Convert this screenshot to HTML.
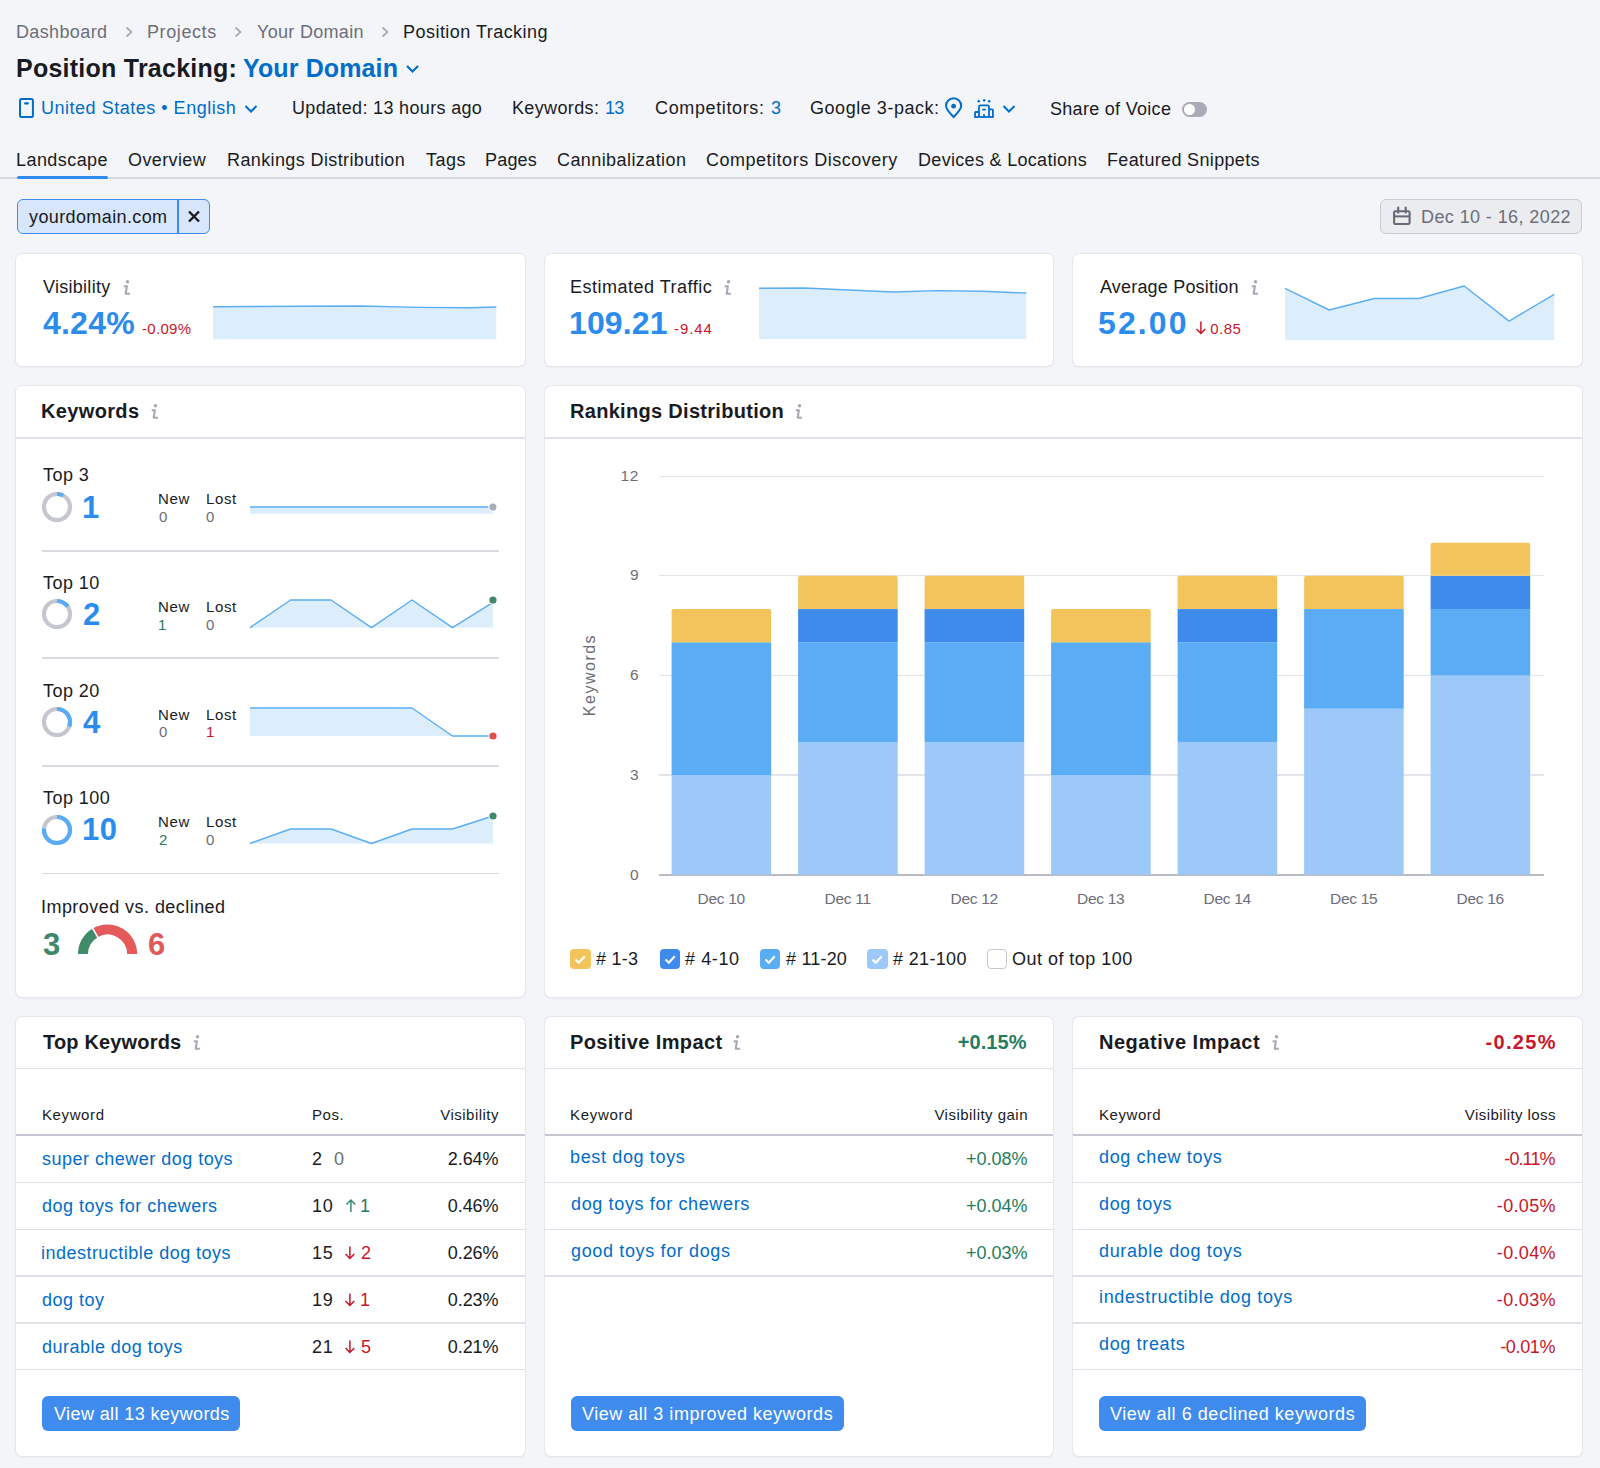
<!DOCTYPE html>
<html><head><meta charset="utf-8"><style>
*{box-sizing:border-box;margin:0;padding:0}
html,body{width:1600px;height:1468px;overflow:hidden;background:#F4F5F9;font-family:"Liberation Sans",sans-serif;color:#191B23;position:relative}
svg{overflow:visible}
</style></head><body>
<div style="position:absolute;left:0.00px;top:177.00px;width:1600.00px;height:2.00px;background:#D6D8DE"></div>
<div style="position:absolute;left:16.50px;top:175.50px;width:91.00px;height:3.00px;background:#2E8BEF;border-radius:2px"></div>
<div style="position:absolute;left:16.80px;top:199.20px;width:192.90px;height:34.50px;background:#D7E6FA;border:1px solid #3A8DEE;border-radius:6px"></div>
<div style="position:absolute;left:177.00px;top:200.00px;width:1.50px;height:33.00px;background:#3A8DEE"></div>
<svg style="position:absolute;left:186.00px;top:209.00px" width="16" height="16" viewBox="186 209 16 16"><path d="M189 211.5 L199 221.5 M199 211.5 L189 221.5" stroke="#191B23" stroke-width="2.4" stroke-linecap="butt"/></svg>
<div style="position:absolute;left:1380.00px;top:199.00px;width:201.50px;height:34.50px;background:#EAECF0;border:1px solid #C9CBD3;border-radius:6px"></div>
<svg style="position:absolute;left:1390.00px;top:205.00px" width="24" height="24" viewBox="1390 205 24 24"><rect x="1394.1" y="211.2" width="15.5" height="12.8" rx="1.2" fill="none" stroke="#676A75" stroke-width="2.1"/><path d="M1394 216.4 H1409.6" stroke="#676A75" stroke-width="2"/><path d="M1398.2 207.6 V212.6 M1405.7 207.6 V212.6" stroke="#676A75" stroke-width="2.1" stroke-linecap="round"/></svg>
<svg style="position:absolute;left:122.70px;top:25.00px" width="12" height="14" viewBox="122.7 25 12 14"><path d="M126.2 27.5 L131.2 32 L126.2 36.5" fill="none" stroke="#A9ABB6" stroke-width="1.8"/></svg>
<svg style="position:absolute;left:232.20px;top:25.00px" width="12" height="14" viewBox="232.2 25 12 14"><path d="M235.7 27.5 L240.7 32 L235.7 36.5" fill="none" stroke="#A9ABB6" stroke-width="1.8"/></svg>
<svg style="position:absolute;left:378.70px;top:25.00px" width="12" height="14" viewBox="378.7 25 12 14"><path d="M382.2 27.5 L387.2 32 L382.2 36.5" fill="none" stroke="#A9ABB6" stroke-width="1.8"/></svg>
<svg style="position:absolute;left:403.00px;top:60.00px" width="20" height="16" viewBox="403 60 20 16"><path d="M407 66 L412.5 71.5 L418 66" fill="none" stroke="#006DCA" stroke-width="2.2"/></svg>
<svg style="position:absolute;left:17.00px;top:96.00px" width="20" height="24" viewBox="17 96 20 24"><rect x="20" y="99.1" width="12.9" height="17.8" rx="1.5" fill="none" stroke="#006DCA" stroke-width="2"/><rect x="24.1" y="102.2" width="4.8" height="2.3" rx="1" fill="#006DCA"/></svg>
<svg style="position:absolute;left:243.00px;top:102.00px" width="16" height="14" viewBox="243 102 16 14"><path d="M245.5 106 L251 111.5 L256.5 106" fill="none" stroke="#006DCA" stroke-width="2"/></svg>
<svg style="position:absolute;left:943.00px;top:97.00px" width="22" height="23" viewBox="943 97 22 23"><path d="M953.6 117 C948 111.5 946 108.5 946 105.8 A7.6 7.6 0 0 1 961.2 105.8 C961.2 108.5 959.2 111.5 953.6 117 Z" fill="none" stroke="#006DCA" stroke-width="2"/><circle cx="953.6" cy="106.2" r="2.4" fill="#006DCA"/></svg>
<svg style="position:absolute;left:972.00px;top:97.00px" width="24" height="23" viewBox="972 97 24 23"><g fill="none" stroke="#006DCA" stroke-width="1.8" stroke-linejoin="round"><path d="M979 117 V106.6 Q979 105.3 980.3 105.3 H987.7 Q989 105.3 989 106.6 V117"/><path d="M975.1 117 V112.6 Q975.1 112 975.7 112 H979"/><path d="M989 109.3 H992.3 Q992.9 109.3 992.9 109.9 V117"/><path d="M974.2 117 H993.8"/><path d="M982.9 109.6 H985.1" stroke-linecap="round"/><path d="M984 116.5 V114.9" stroke-linecap="round"/></g><circle cx="978.8" cy="101.3" r="1.25" fill="#006DCA"/><circle cx="984.2" cy="100.2" r="1.25" fill="#006DCA"/><circle cx="989.2" cy="101.3" r="1.25" fill="#006DCA"/></svg>
<svg style="position:absolute;left:1001.00px;top:102.00px" width="16" height="14" viewBox="1001 102 16 14"><path d="M1003.5 106 L1009 111.5 L1014.5 106" fill="none" stroke="#006DCA" stroke-width="2"/></svg>
<div style="position:absolute;left:1181.60px;top:101.80px;width:25.20px;height:15.00px;background:#A9ABB6;border-radius:8px"></div>
<div style="position:absolute;left:1183.6px;top:103.8px;width:11px;height:11px;border-radius:50%;background:#fff"></div>
<div style="position:absolute;left:16.00px;top:254.00px;width:509.00px;height:112.00px;background:#fff;border-radius:6px;box-shadow:0 0 0 1px #E6E7ED,0 1px 2px rgba(25,27,35,.10)"></div>
<div style="position:absolute;left:545.00px;top:254.00px;width:508.00px;height:112.00px;background:#fff;border-radius:6px;box-shadow:0 0 0 1px #E6E7ED,0 1px 2px rgba(25,27,35,.10)"></div>
<div style="position:absolute;left:1073.00px;top:254.00px;width:509.00px;height:112.00px;background:#fff;border-radius:6px;box-shadow:0 0 0 1px #E6E7ED,0 1px 2px rgba(25,27,35,.10)"></div>
<div style="position:absolute;left:16.00px;top:386.00px;width:509.00px;height:610.50px;background:#fff;border-radius:6px;box-shadow:0 0 0 1px #E6E7ED,0 1px 2px rgba(25,27,35,.10)"></div>
<div style="position:absolute;left:545.00px;top:386.00px;width:1037.00px;height:611.00px;background:#fff;border-radius:6px;box-shadow:0 0 0 1px #E6E7ED,0 1px 2px rgba(25,27,35,.10)"></div>
<div style="position:absolute;left:16.00px;top:1017.00px;width:509.00px;height:439.00px;background:#fff;border-radius:6px;box-shadow:0 0 0 1px #E6E7ED,0 1px 2px rgba(25,27,35,.10)"></div>
<div style="position:absolute;left:545.00px;top:1017.00px;width:508.00px;height:439.00px;background:#fff;border-radius:6px;box-shadow:0 0 0 1px #E6E7ED,0 1px 2px rgba(25,27,35,.10)"></div>
<div style="position:absolute;left:1073.00px;top:1017.00px;width:509.00px;height:439.00px;background:#fff;border-radius:6px;box-shadow:0 0 0 1px #E6E7ED,0 1px 2px rgba(25,27,35,.10)"></div>
<svg style="position:absolute;left:210.60px;top:303.80px" width="293.4" height="37.2" viewBox="210.6 303.8 293.4 37.2"><path d="M212.6 306.5 L300.0 306.0 L360.0 305.8 L420.0 307.2 L470.0 307.5 L496.0 306.8 L496.0 339.0 L212.6 339.0 Z" fill="#DCEDFC"/><path d="M212.6 306.5 L300.0 306.0 L360.0 305.8 L420.0 307.2 L470.0 307.5 L496.0 306.8" fill="none" stroke="#5AAEF5" stroke-width="1.4" stroke-linejoin="round"/></svg>
<svg style="position:absolute;left:756.70px;top:286.00px" width="277.3" height="55" viewBox="756.7 286 277.3 55"><path d="M758.7 288.3 L804.0 288.0 L893.0 292.0 L938.0 290.6 L982.0 291.3 L1026.0 293.0 L1026.0 339.0 L758.7 339.0 Z" fill="#DCEDFC"/><path d="M758.7 288.3 L804.0 288.0 L893.0 292.0 L938.0 290.6 L982.0 291.3 L1026.0 293.0" fill="none" stroke="#5AAEF5" stroke-width="1.4" stroke-linejoin="round"/></svg>
<svg style="position:absolute;left:1283.10px;top:283.90px" width="279.3" height="58.3" viewBox="1283.1 283.9 279.3 58.3"><path d="M1285.1 288.3 L1329.3 309.9 L1374.5 298.4 L1418.8 298.4 L1464.3 285.9 L1509.2 321.0 L1554.4 294.3 L1554.4 340.2 L1285.1 340.2 Z" fill="#DCEDFC"/><path d="M1285.1 288.3 L1329.3 309.9 L1374.5 298.4 L1418.8 298.4 L1464.3 285.9 L1509.2 321.0 L1554.4 294.3" fill="none" stroke="#5AAEF5" stroke-width="1.4" stroke-linejoin="round"/></svg>
<svg style="position:absolute;left:121.60px;top:278.00px" width="12" height="19" viewBox="121.6 278 12 19"><circle cx="127.10" cy="281.70" r="1.75" fill="#A6A9B3"/><path d="M123.30 286.20 H126.50 L125.30 293.70 H129.50" fill="none" stroke="#A6A9B3" stroke-width="2.1" stroke-linejoin="round"/></svg>
<svg style="position:absolute;left:723.00px;top:278.00px" width="12" height="19" viewBox="723 278 12 19"><circle cx="728.50" cy="281.70" r="1.75" fill="#A6A9B3"/><path d="M724.70 286.20 H727.90 L726.70 293.70 H730.90" fill="none" stroke="#A6A9B3" stroke-width="2.1" stroke-linejoin="round"/></svg>
<svg style="position:absolute;left:1249.70px;top:278.00px" width="12" height="19" viewBox="1249.7 278 12 19"><circle cx="1255.20" cy="281.70" r="1.75" fill="#A6A9B3"/><path d="M1251.40 286.20 H1254.60 L1253.40 293.70 H1257.60" fill="none" stroke="#A6A9B3" stroke-width="2.1" stroke-linejoin="round"/></svg>
<svg style="position:absolute;left:149.90px;top:401.80px" width="12" height="19" viewBox="149.9 401.8 12 19"><circle cx="155.40" cy="405.50" r="1.75" fill="#A6A9B3"/><path d="M151.60 410.00 H154.80 L153.60 417.50 H157.80" fill="none" stroke="#A6A9B3" stroke-width="2.1" stroke-linejoin="round"/></svg>
<svg style="position:absolute;left:793.80px;top:401.80px" width="12" height="19" viewBox="793.8 401.8 12 19"><circle cx="799.30" cy="405.50" r="1.75" fill="#A6A9B3"/><path d="M795.50 410.00 H798.70 L797.50 417.50 H801.70" fill="none" stroke="#A6A9B3" stroke-width="2.1" stroke-linejoin="round"/></svg>
<svg style="position:absolute;left:192.40px;top:1032.70px" width="12" height="19" viewBox="192.4 1032.7 12 19"><circle cx="197.90" cy="1036.40" r="1.75" fill="#A6A9B3"/><path d="M194.10 1040.90 H197.30 L196.10 1048.40 H200.30" fill="none" stroke="#A6A9B3" stroke-width="2.1" stroke-linejoin="round"/></svg>
<svg style="position:absolute;left:732.40px;top:1032.70px" width="12" height="19" viewBox="732.4 1032.7 12 19"><circle cx="737.90" cy="1036.40" r="1.75" fill="#A6A9B3"/><path d="M734.10 1040.90 H737.30 L736.10 1048.40 H740.30" fill="none" stroke="#A6A9B3" stroke-width="2.1" stroke-linejoin="round"/></svg>
<svg style="position:absolute;left:1271.00px;top:1032.70px" width="12" height="19" viewBox="1271 1032.7 12 19"><circle cx="1276.50" cy="1036.40" r="1.75" fill="#A6A9B3"/><path d="M1272.70 1040.90 H1275.90 L1274.70 1048.40 H1278.90" fill="none" stroke="#A6A9B3" stroke-width="2.1" stroke-linejoin="round"/></svg>
<div style="position:absolute;left:16.00px;top:437.00px;width:509.00px;height:1.50px;background:#E0E1E9"></div>
<div style="position:absolute;left:42.20px;top:550.00px;width:457.30px;height:1.50px;background:#D9DBE1"></div>
<div style="position:absolute;left:42.20px;top:657.00px;width:457.30px;height:1.50px;background:#D9DBE1"></div>
<div style="position:absolute;left:42.20px;top:765.00px;width:457.30px;height:1.50px;background:#D9DBE1"></div>
<div style="position:absolute;left:42.20px;top:872.50px;width:457.30px;height:1.50px;background:#D9DBE1"></div>
<svg style="position:absolute;left:38.90px;top:488.50px" width="36" height="36" viewBox="38.9 488.5 36 36"><circle cx="56.90" cy="506.50" r="13" fill="none" stroke="#C4C7CF" stroke-width="4.2"/><path d="M56.90 493.50 A13 13 0 0 1 62.94 494.99" fill="none" stroke="#58ACF5" stroke-width="4.2"/></svg>
<svg style="position:absolute;left:38.90px;top:596.20px" width="36" height="36" viewBox="38.9 596.2 36 36"><circle cx="56.90" cy="614.20" r="13" fill="none" stroke="#C4C7CF" stroke-width="4.2"/><path d="M56.90 601.20 A13 13 0 0 1 67.60 606.82" fill="none" stroke="#58ACF5" stroke-width="4.2"/></svg>
<svg style="position:absolute;left:38.90px;top:703.80px" width="36" height="36" viewBox="38.9 703.8 36 36"><circle cx="56.90" cy="721.80" r="13" fill="none" stroke="#C4C7CF" stroke-width="4.2"/><path d="M56.90 708.80 A13 13 0 0 1 69.06 726.41" fill="none" stroke="#58ACF5" stroke-width="4.2"/></svg>
<svg style="position:absolute;left:38.90px;top:811.80px" width="36" height="36" viewBox="38.9 811.8 36 36"><circle cx="56.90" cy="829.80" r="13" fill="none" stroke="#C4C7CF" stroke-width="4.2"/><path d="M56.90 816.80 A13 13 0 1 1 43.99 828.23" fill="none" stroke="#58ACF5" stroke-width="4.2"/></svg>
<svg style="position:absolute;left:247.70px;top:504.60px" width="253" height="10.7" viewBox="247.7 504.6 253 10.7"><path d="M249.7 506.6 L492.7 506.6 L492.7 513.3 L249.7 513.3 Z" fill="#DCEDFC"/><path d="M249.7 506.6 L492.7 506.6" fill="none" stroke="#5AAEF5" stroke-width="1.4" stroke-linejoin="round"/><circle cx="492.7" cy="506.6" r="4.6" fill="#fff"/><circle cx="492.7" cy="506.6" r="3.6" fill="#A9ABB6"/></svg>
<svg style="position:absolute;left:247.70px;top:598.40px" width="253" height="31.6" viewBox="247.7 598.4 253 31.6"><path d="M249.7 628.0 L290.2 600.4 L330.7 600.4 L371.2 628.0 L411.7 600.4 L452.2 628.0 L492.7 602.8 L492.7 628.0 L249.7 628.0 Z" fill="#DCEDFC"/><path d="M249.7 628.0 L290.2 600.4 L330.7 600.4 L371.2 628.0 L411.7 600.4 L452.2 628.0 L492.7 602.8" fill="none" stroke="#5AAEF5" stroke-width="1.4" stroke-linejoin="round"/><circle cx="492.7" cy="600.4" r="4.6" fill="#fff"/><circle cx="492.7" cy="600.4" r="3.6" fill="#3C8A68"/></svg>
<svg style="position:absolute;left:247.70px;top:705.70px" width="253" height="32" viewBox="247.7 705.7 253 32"><path d="M249.7 707.7 L411.7 707.7 L452.2 735.7 L492.7 735.7 L492.7 735.7 L249.7 735.7 Z" fill="#DCEDFC"/><path d="M249.7 707.7 L411.7 707.7 L452.2 735.7 L492.7 735.7" fill="none" stroke="#5AAEF5" stroke-width="1.4" stroke-linejoin="round"/><circle cx="492.7" cy="735.7" r="4.6" fill="#fff"/><circle cx="492.7" cy="735.7" r="3.6" fill="#E04C4C"/></svg>
<svg style="position:absolute;left:247.70px;top:814.20px" width="253" height="31.5" viewBox="247.7 814.2 253 31.5"><path d="M249.7 843.7 L290.2 829.2 L330.7 829.2 L371.2 843.7 L411.7 829.2 L452.2 829.2 L492.7 816.2 L492.7 843.7 L249.7 843.7 Z" fill="#DCEDFC"/><path d="M249.7 843.7 L290.2 829.2 L330.7 829.2 L371.2 843.7 L411.7 829.2 L452.2 829.2 L492.7 816.2" fill="none" stroke="#5AAEF5" stroke-width="1.4" stroke-linejoin="round"/><circle cx="492.7" cy="816.2" r="4.6" fill="#fff"/><circle cx="492.7" cy="816.2" r="3.6" fill="#3C8A68"/></svg>
<svg style="position:absolute;left:70.00px;top:918.00px" width="76" height="40" viewBox="70 918 76 40"><path d="M82.95 954.10 A24.6 24.6 0 0 1 95.25 932.80" fill="none" stroke="#3F8B6A" stroke-width="10"/><path d="M95.25 932.80 A24.6 24.6 0 0 1 132.15 954.10" fill="none" stroke="#E45A5A" stroke-width="10"/><path d="M98.05 937.65 L91.55 926.39" stroke="#fff" stroke-width="1.6"/></svg>
<div style="position:absolute;left:545.00px;top:437.00px;width:1037.00px;height:1.50px;background:#E0E1E9"></div>
<div style="position:absolute;left:659.30px;top:475.60px;width:885.00px;height:1.40px;background:#E3E5EB"></div>
<div style="position:absolute;left:659.30px;top:575.10px;width:885.00px;height:1.40px;background:#E3E5EB"></div>
<div style="position:absolute;left:659.30px;top:674.70px;width:885.00px;height:1.40px;background:#E3E5EB"></div>
<div style="position:absolute;left:659.30px;top:774.40px;width:885.00px;height:1.40px;background:#E3E5EB"></div>
<div style="position:absolute;left:659.30px;top:874.20px;width:885.00px;height:1.60px;background:#B9BCC5"></div>
<svg style="position:absolute;left:660.00px;top:470.00px" width="890" height="405" viewBox="660 470 890 405"><rect x="671.60" y="775.15" width="99.60" height="99.65" fill="#9DC9F9"/><rect x="671.60" y="642.28" width="99.60" height="132.87" fill="#5AACF5"/><path d="M671.60 642.28 V611.07 Q671.60 609.07 673.60 609.07 H769.20 Q771.20 609.07 771.20 611.07 V642.28 Z" fill="#F3C35C"/><rect x="798.10" y="741.93" width="99.60" height="132.87" fill="#9DC9F9"/><rect x="798.10" y="642.28" width="99.60" height="99.65" fill="#5AACF5"/><rect x="798.10" y="609.07" width="99.60" height="33.22" fill="#3F8BEC"/><path d="M798.10 609.07 V577.85 Q798.10 575.85 800.10 575.85 H895.70 Q897.70 575.85 897.70 577.85 V609.07 Z" fill="#F3C35C"/><rect x="924.60" y="741.93" width="99.60" height="132.87" fill="#9DC9F9"/><rect x="924.60" y="642.28" width="99.60" height="99.65" fill="#5AACF5"/><rect x="924.60" y="609.07" width="99.60" height="33.22" fill="#3F8BEC"/><path d="M924.60 609.07 V577.85 Q924.60 575.85 926.60 575.85 H1022.20 Q1024.20 575.85 1024.20 577.85 V609.07 Z" fill="#F3C35C"/><rect x="1051.10" y="775.15" width="99.60" height="99.65" fill="#9DC9F9"/><rect x="1051.10" y="642.28" width="99.60" height="132.87" fill="#5AACF5"/><path d="M1051.10 642.28 V611.07 Q1051.10 609.07 1053.10 609.07 H1148.70 Q1150.70 609.07 1150.70 611.07 V642.28 Z" fill="#F3C35C"/><rect x="1177.60" y="741.93" width="99.60" height="132.87" fill="#9DC9F9"/><rect x="1177.60" y="642.28" width="99.60" height="99.65" fill="#5AACF5"/><rect x="1177.60" y="609.07" width="99.60" height="33.22" fill="#3F8BEC"/><path d="M1177.60 609.07 V577.85 Q1177.60 575.85 1179.60 575.85 H1275.20 Q1277.20 575.85 1277.20 577.85 V609.07 Z" fill="#F3C35C"/><rect x="1304.10" y="708.72" width="99.60" height="166.08" fill="#9DC9F9"/><rect x="1304.10" y="609.07" width="99.60" height="99.65" fill="#5AACF5"/><path d="M1304.10 609.07 V577.85 Q1304.10 575.85 1306.10 575.85 H1401.70 Q1403.70 575.85 1403.70 577.85 V609.07 Z" fill="#F3C35C"/><rect x="1430.60" y="675.50" width="99.60" height="199.30" fill="#9DC9F9"/><rect x="1430.60" y="609.07" width="99.60" height="66.43" fill="#5AACF5"/><rect x="1430.60" y="575.85" width="99.60" height="33.22" fill="#3F8BEC"/><path d="M1430.60 575.85 V544.63 Q1430.60 542.63 1432.60 542.63 H1528.20 Q1530.20 542.63 1530.20 544.63 V575.85 Z" fill="#F3C35C"/></svg>
<div style="position:absolute;left:540px;top:665px;width:100px;height:20px;line-height:20px;text-align:center;font-size:16px;color:#6C6E79;transform:rotate(-90deg);letter-spacing:1.5px">Keywords</div>
<div style="position:absolute;left:570.40px;top:948.70px;width:20.20px;height:20.30px;background:#F3C35C;border-radius:4px;"></div>
<svg style="position:absolute;left:570.40px;top:948.70px" width="20.2" height="20.3" viewBox="0 0 20.2 20.3"><path d="M5.5 10.5 L8.8 13.8 L14.8 7.2" fill="none" stroke="#fff" stroke-width="2.1"/></svg>
<div style="position:absolute;left:659.80px;top:948.70px;width:20.20px;height:20.30px;background:#3F8BEC;border-radius:4px;"></div>
<svg style="position:absolute;left:659.80px;top:948.70px" width="20.2" height="20.3" viewBox="0 0 20.2 20.3"><path d="M5.5 10.5 L8.8 13.8 L14.8 7.2" fill="none" stroke="#fff" stroke-width="2.1"/></svg>
<div style="position:absolute;left:760.00px;top:948.70px;width:20.20px;height:20.30px;background:#5AACF5;border-radius:4px;"></div>
<svg style="position:absolute;left:760.00px;top:948.70px" width="20.2" height="20.3" viewBox="0 0 20.2 20.3"><path d="M5.5 10.5 L8.8 13.8 L14.8 7.2" fill="none" stroke="#fff" stroke-width="2.1"/></svg>
<div style="position:absolute;left:867.40px;top:948.70px;width:20.20px;height:20.30px;background:#9DC9F9;border-radius:4px;"></div>
<svg style="position:absolute;left:867.40px;top:948.70px" width="20.2" height="20.3" viewBox="0 0 20.2 20.3"><path d="M5.5 10.5 L8.8 13.8 L14.8 7.2" fill="none" stroke="#fff" stroke-width="2.1"/></svg>
<div style="position:absolute;left:987.20px;top:948.70px;width:20.20px;height:20.30px;background:#fff;border:1px solid #C4C7CF;border-radius:4px;"></div>
<div style="position:absolute;left:16.00px;top:1067.50px;width:509.00px;height:1.50px;background:#E0E1E9"></div>
<div style="position:absolute;left:16.00px;top:1134.00px;width:509.00px;height:2.00px;background:#C4C7CF"></div>
<div style="position:absolute;left:545.00px;top:1067.50px;width:508.00px;height:1.50px;background:#E0E1E9"></div>
<div style="position:absolute;left:545.00px;top:1134.00px;width:508.00px;height:2.00px;background:#C4C7CF"></div>
<div style="position:absolute;left:1073.00px;top:1067.50px;width:509.00px;height:1.50px;background:#E0E1E9"></div>
<div style="position:absolute;left:1073.00px;top:1134.00px;width:509.00px;height:2.00px;background:#C4C7CF"></div>
<div style="position:absolute;left:16.00px;top:1181.50px;width:509.00px;height:1.50px;background:#E0E1E9"></div>
<div style="position:absolute;left:1073.00px;top:1181.50px;width:509.00px;height:1.50px;background:#E0E1E9"></div>
<div style="position:absolute;left:16.00px;top:1228.70px;width:509.00px;height:1.50px;background:#E0E1E9"></div>
<div style="position:absolute;left:1073.00px;top:1228.70px;width:509.00px;height:1.50px;background:#E0E1E9"></div>
<div style="position:absolute;left:16.00px;top:1275.00px;width:509.00px;height:1.50px;background:#E0E1E9"></div>
<div style="position:absolute;left:1073.00px;top:1275.00px;width:509.00px;height:1.50px;background:#E0E1E9"></div>
<div style="position:absolute;left:16.00px;top:1322.00px;width:509.00px;height:1.50px;background:#E0E1E9"></div>
<div style="position:absolute;left:1073.00px;top:1322.00px;width:509.00px;height:1.50px;background:#E0E1E9"></div>
<div style="position:absolute;left:16.00px;top:1368.80px;width:509.00px;height:1.50px;background:#E0E1E9"></div>
<div style="position:absolute;left:1073.00px;top:1368.80px;width:509.00px;height:1.50px;background:#E0E1E9"></div>
<div style="position:absolute;left:545.00px;top:1181.50px;width:508.00px;height:1.50px;background:#E0E1E9"></div>
<div style="position:absolute;left:545.00px;top:1228.70px;width:508.00px;height:1.50px;background:#E0E1E9"></div>
<div style="position:absolute;left:545.00px;top:1275.00px;width:508.00px;height:1.50px;background:#E0E1E9"></div>
<svg style="position:absolute;left:342.50px;top:1197.00px" width="16" height="17" viewBox="342.5 1197 16 17"><path d="M350.4 1212.0 V1200.0 M346.0 1204.5 L350.4 1200.0 L354.8 1204.5" fill="none" stroke="#3A8A6E" stroke-width="1.5"/></svg>
<svg style="position:absolute;left:342.20px;top:1244.00px" width="16" height="17" viewBox="342.2 1244 16 17"><path d="M350.1 1246.5 V1258.5 M345.7 1254.0 L350.1 1258.5 L354.5 1254.0" fill="none" stroke="#C9162B" stroke-width="1.5"/></svg>
<svg style="position:absolute;left:342.20px;top:1290.80px" width="16" height="17" viewBox="342.2 1290.8 16 17"><path d="M350.1 1293.3 V1305.3 M345.7 1300.8 L350.1 1305.3 L354.5 1300.8" fill="none" stroke="#C9162B" stroke-width="1.5"/></svg>
<svg style="position:absolute;left:342.20px;top:1337.80px" width="16" height="17" viewBox="342.2 1337.8 16 17"><path d="M350.1 1340.3 V1352.3 M345.7 1347.8 L350.1 1352.3 L354.5 1347.8" fill="none" stroke="#C9162B" stroke-width="1.5"/></svg>
<svg style="position:absolute;left:1193.00px;top:318.80px" width="16" height="17" viewBox="1193 318.8 16 17"><path d="M1200.9 321.3 V333.3 M1196.5 328.8 L1200.9 333.3 L1205.3 328.8" fill="none" stroke="#C9162B" stroke-width="1.5"/></svg>
<div style="position:absolute;left:42.20px;top:1395.90px;width:198.10px;height:34.80px;background:#3F8CEE;border-radius:6px"></div>
<div style="position:absolute;left:570.50px;top:1395.70px;width:273.70px;height:35.10px;background:#3F8CEE;border-radius:6px"></div>
<div style="position:absolute;left:1098.60px;top:1395.70px;width:267.80px;height:35.10px;background:#3F8CEE;border-radius:6px"></div>
<div id="bc1" style="position:absolute;white-space:nowrap;top:20.76px;font-size:18px;line-height:22px;color:#6C6E79;letter-spacing:0.368px;left:16.00px;">Dashboard</div>
<div id="bc2" style="position:absolute;white-space:nowrap;top:20.76px;font-size:18px;line-height:22px;color:#6C6E79;letter-spacing:0.596px;left:147.00px;">Projects</div>
<div id="bc3" style="position:absolute;white-space:nowrap;top:20.76px;font-size:18px;line-height:22px;color:#6C6E79;letter-spacing:0.310px;left:257.00px;">Your Domain</div>
<div id="bc4" style="position:absolute;white-space:nowrap;top:20.76px;font-size:18px;line-height:22px;color:#191B23;letter-spacing:0.466px;left:403.00px;">Position Tracking</div>
<div id="ti1" style="position:absolute;white-space:nowrap;top:52.84px;font-size:25px;line-height:31px;color:#191B23;letter-spacing:0.243px;font-weight:bold;left:16.00px;">Position Tracking:</div>
<div id="ti2" style="position:absolute;white-space:nowrap;top:52.84px;font-size:25px;line-height:31px;color:#006DCA;letter-spacing:0.125px;font-weight:bold;left:243.00px;">Your Domain</div>
<div id="m1" style="position:absolute;white-space:nowrap;top:96.66px;font-size:18px;line-height:22px;color:#006DCA;letter-spacing:0.515px;left:41.00px;">United States • English</div>
<div id="m2" style="position:absolute;white-space:nowrap;top:96.66px;font-size:18px;line-height:22px;color:#191B23;letter-spacing:0.335px;left:292.00px;">Updated: 13 hours ago</div>
<div id="m3" style="position:absolute;white-space:nowrap;top:96.66px;font-size:18px;line-height:22px;color:#191B23;letter-spacing:0.368px;left:512.00px;">Keywords:</div>
<div id="m3b" style="position:absolute;white-space:nowrap;top:96.66px;font-size:18px;line-height:22px;color:#006DCA;letter-spacing:-0.690px;left:605.00px;">13</div>
<div id="m4" style="position:absolute;white-space:nowrap;top:96.66px;font-size:18px;line-height:22px;color:#191B23;letter-spacing:0.628px;left:655.00px;">Competitors:</div>
<div id="m4b" style="position:absolute;white-space:nowrap;top:96.66px;font-size:18px;line-height:22px;color:#006DCA;letter-spacing:0.810px;left:771.00px;">3</div>
<div id="m5" style="position:absolute;white-space:nowrap;top:96.66px;font-size:18px;line-height:22px;color:#191B23;letter-spacing:0.541px;left:810.00px;">Google 3-pack:</div>
<div id="m6" style="position:absolute;white-space:nowrap;top:97.66px;font-size:18px;line-height:22px;color:#191B23;letter-spacing:0.295px;left:1050.00px;">Share of Voice</div>
<div id="tab0" style="position:absolute;white-space:nowrap;top:148.76px;font-size:18px;line-height:22px;color:#191B23;letter-spacing:0.435px;left:16.00px;">Landscape</div>
<div id="tab1" style="position:absolute;white-space:nowrap;top:148.76px;font-size:18px;line-height:22px;color:#191B23;letter-spacing:0.381px;left:128.00px;">Overview</div>
<div id="tab2" style="position:absolute;white-space:nowrap;top:148.76px;font-size:18px;line-height:22px;color:#191B23;letter-spacing:0.385px;left:227.00px;">Rankings Distribution</div>
<div id="tab3" style="position:absolute;white-space:nowrap;top:148.76px;font-size:18px;line-height:22px;color:#191B23;letter-spacing:0.477px;left:426.00px;">Tags</div>
<div id="tab4" style="position:absolute;white-space:nowrap;top:148.76px;font-size:18px;line-height:22px;color:#191B23;letter-spacing:0.185px;left:485.00px;">Pages</div>
<div id="tab5" style="position:absolute;white-space:nowrap;top:148.76px;font-size:18px;line-height:22px;color:#191B23;letter-spacing:0.417px;left:557.00px;">Cannibalization</div>
<div id="tab6" style="position:absolute;white-space:nowrap;top:148.76px;font-size:18px;line-height:22px;color:#191B23;letter-spacing:0.510px;left:706.00px;">Competitors Discovery</div>
<div id="tab7" style="position:absolute;white-space:nowrap;top:148.76px;font-size:18px;line-height:22px;color:#191B23;letter-spacing:0.310px;left:918.00px;">Devices &amp; Locations</div>
<div id="tab8" style="position:absolute;white-space:nowrap;top:148.76px;font-size:18px;line-height:22px;color:#191B23;letter-spacing:0.341px;left:1107.00px;">Featured Snippets</div>
<div id="chip" style="position:absolute;white-space:nowrap;top:205.66px;font-size:18px;line-height:22px;color:#191B23;letter-spacing:0.387px;left:29.00px;">yourdomain.com</div>
<div id="date" style="position:absolute;white-space:nowrap;top:205.66px;font-size:18px;line-height:22px;color:#6C6E79;letter-spacing:0.404px;left:1421.00px;">Dec 10 - 16, 2022</div>
<div id="v1" style="position:absolute;white-space:nowrap;top:275.56px;font-size:18px;line-height:22px;color:#191B23;letter-spacing:0.278px;left:43.00px;">Visibility</div>
<div id="v2" style="position:absolute;white-space:nowrap;top:303.01px;font-size:32px;line-height:40px;color:#2B8CEE;letter-spacing:0.215px;font-weight:bold;left:43.00px;">4.24%</div>
<div id="v3" style="position:absolute;white-space:nowrap;top:319.10px;font-size:15px;line-height:19px;color:#C9162B;letter-spacing:0.295px;left:142.00px;">-0.09%</div>
<div id="e1" style="position:absolute;white-space:nowrap;top:275.56px;font-size:18px;line-height:22px;color:#191B23;letter-spacing:0.497px;left:570.00px;">Estimated Traffic</div>
<div id="e2" style="position:absolute;white-space:nowrap;top:303.01px;font-size:32px;line-height:40px;color:#2B8CEE;letter-spacing:0.120px;font-weight:bold;left:569.00px;">109.21</div>
<div id="e3" style="position:absolute;white-space:nowrap;top:319.10px;font-size:15px;line-height:19px;color:#C9162B;letter-spacing:0.925px;left:674.00px;">-9.44</div>
<div id="a1" style="position:absolute;white-space:nowrap;top:275.56px;font-size:18px;line-height:22px;color:#191B23;letter-spacing:0.184px;left:1100.00px;">Average Position</div>
<div id="a2" style="position:absolute;white-space:nowrap;top:303.01px;font-size:32px;line-height:40px;color:#2B8CEE;letter-spacing:2.090px;font-weight:bold;left:1098.00px;">52.00</div>
<div id="a3" style="position:absolute;white-space:nowrap;top:319.10px;font-size:15px;line-height:19px;color:#C9162B;letter-spacing:0.476px;left:1210.20px;">0.85</div>
<div id="k0" style="position:absolute;white-space:nowrap;top:399.37px;font-size:20px;line-height:25px;color:#191B23;letter-spacing:0.354px;font-weight:bold;left:41.00px;">Keywords</div>
<div id="kr0" style="position:absolute;white-space:nowrap;top:464.46px;font-size:18px;line-height:22px;color:#191B23;letter-spacing:0.460px;left:43.00px;">Top 3</div>
<div id="kn0" style="position:absolute;white-space:nowrap;top:487.56px;font-size:31px;line-height:39px;color:#2B8CEE;letter-spacing:1.395px;font-weight:bold;left:82.00px;">1</div>
<div id="knew0" style="position:absolute;white-space:nowrap;top:489.30px;font-size:15px;line-height:19px;color:#191B23;letter-spacing:0.725px;left:158.00px;">New</div>
<div id="klost0" style="position:absolute;white-space:nowrap;top:489.30px;font-size:15px;line-height:19px;color:#191B23;letter-spacing:0.610px;left:206.00px;">Lost</div>
<div id="knv0" style="position:absolute;white-space:nowrap;top:507.20px;font-size:15px;line-height:19px;color:#6C6E79;letter-spacing:0.675px;left:159.00px;">0</div>
<div id="klv0" style="position:absolute;white-space:nowrap;top:507.20px;font-size:15px;line-height:19px;color:#6C6E79;letter-spacing:0.675px;left:206.00px;">0</div>
<div id="kr1" style="position:absolute;white-space:nowrap;top:571.76px;font-size:18px;line-height:22px;color:#191B23;letter-spacing:0.460px;left:43.00px;">Top 10</div>
<div id="kn1" style="position:absolute;white-space:nowrap;top:594.86px;font-size:31px;line-height:39px;color:#2B8CEE;letter-spacing:1.395px;font-weight:bold;left:83.00px;">2</div>
<div id="knew1" style="position:absolute;white-space:nowrap;top:596.60px;font-size:15px;line-height:19px;color:#191B23;letter-spacing:0.725px;left:158.00px;">New</div>
<div id="klost1" style="position:absolute;white-space:nowrap;top:596.60px;font-size:15px;line-height:19px;color:#191B23;letter-spacing:0.610px;left:206.00px;">Lost</div>
<div id="knv1" style="position:absolute;white-space:nowrap;top:614.50px;font-size:15px;line-height:19px;color:#247D5E;letter-spacing:0.675px;left:158.00px;">1</div>
<div id="klv1" style="position:absolute;white-space:nowrap;top:614.50px;font-size:15px;line-height:19px;color:#6C6E79;letter-spacing:0.675px;left:206.00px;">0</div>
<div id="kr2" style="position:absolute;white-space:nowrap;top:679.66px;font-size:18px;line-height:22px;color:#191B23;letter-spacing:0.460px;left:43.00px;">Top 20</div>
<div id="kn2" style="position:absolute;white-space:nowrap;top:702.76px;font-size:31px;line-height:39px;color:#2B8CEE;letter-spacing:1.395px;font-weight:bold;left:83.00px;">4</div>
<div id="knew2" style="position:absolute;white-space:nowrap;top:704.50px;font-size:15px;line-height:19px;color:#191B23;letter-spacing:0.725px;left:158.00px;">New</div>
<div id="klost2" style="position:absolute;white-space:nowrap;top:704.50px;font-size:15px;line-height:19px;color:#191B23;letter-spacing:0.610px;left:206.00px;">Lost</div>
<div id="knv2" style="position:absolute;white-space:nowrap;top:722.40px;font-size:15px;line-height:19px;color:#6C6E79;letter-spacing:0.675px;left:159.00px;">0</div>
<div id="klv2" style="position:absolute;white-space:nowrap;top:722.40px;font-size:15px;line-height:19px;color:#C9162B;letter-spacing:0.675px;left:206.00px;">1</div>
<div id="kr3" style="position:absolute;white-space:nowrap;top:787.26px;font-size:18px;line-height:22px;color:#191B23;letter-spacing:0.460px;left:43.00px;">Top 100</div>
<div id="kn3" style="position:absolute;white-space:nowrap;top:810.36px;font-size:31px;line-height:39px;color:#2B8CEE;letter-spacing:0.495px;font-weight:bold;left:82.00px;">10</div>
<div id="knew3" style="position:absolute;white-space:nowrap;top:812.10px;font-size:15px;line-height:19px;color:#191B23;letter-spacing:0.725px;left:158.00px;">New</div>
<div id="klost3" style="position:absolute;white-space:nowrap;top:812.10px;font-size:15px;line-height:19px;color:#191B23;letter-spacing:0.610px;left:206.00px;">Lost</div>
<div id="knv3" style="position:absolute;white-space:nowrap;top:830.00px;font-size:15px;line-height:19px;color:#247D5E;letter-spacing:0.675px;left:159.00px;">2</div>
<div id="klv3" style="position:absolute;white-space:nowrap;top:830.00px;font-size:15px;line-height:19px;color:#6C6E79;letter-spacing:0.675px;left:206.00px;">0</div>
<div id="imp" style="position:absolute;white-space:nowrap;top:895.66px;font-size:18px;line-height:22px;color:#191B23;letter-spacing:0.450px;left:41.00px;">Improved vs. declined</div>
<div id="imp3" style="position:absolute;white-space:nowrap;top:924.76px;font-size:31px;line-height:39px;color:#3C8868;letter-spacing:1.395px;font-weight:bold;left:43.00px;">3</div>
<div id="imp6" style="position:absolute;white-space:nowrap;top:924.76px;font-size:31px;line-height:39px;color:#E05A5A;letter-spacing:1.395px;font-weight:bold;left:148.00px;">6</div>
<div id="rd0" style="position:absolute;white-space:nowrap;top:399.37px;font-size:20px;line-height:25px;color:#191B23;letter-spacing:0.300px;font-weight:bold;left:570.00px;">Rankings Distribution</div>
<div id="ya12" style="position:absolute;white-space:nowrap;top:465.93px;font-size:15.5px;line-height:19px;color:#6C6E79;letter-spacing:0.675px;right:960.83px;text-align:right;">12</div>
<div id="ya9" style="position:absolute;white-space:nowrap;top:565.43px;font-size:15.5px;line-height:19px;color:#6C6E79;letter-spacing:0.675px;right:960.83px;text-align:right;">9</div>
<div id="ya6" style="position:absolute;white-space:nowrap;top:665.03px;font-size:15.5px;line-height:19px;color:#6C6E79;letter-spacing:0.675px;right:960.83px;text-align:right;">6</div>
<div id="ya3" style="position:absolute;white-space:nowrap;top:764.73px;font-size:15.5px;line-height:19px;color:#6C6E79;letter-spacing:0.675px;right:960.83px;text-align:right;">3</div>
<div id="ya0" style="position:absolute;white-space:nowrap;top:864.53px;font-size:15.5px;line-height:19px;color:#6C6E79;letter-spacing:0.675px;right:960.83px;text-align:right;">0</div>
<div id="xd0" style="position:absolute;white-space:nowrap;top:888.93px;font-size:15.5px;line-height:19px;color:#6C6E79;letter-spacing:-0.285px;left:621.40px;width:200px;text-align:center;text-indent:-0.285px;">Dec 10</div>
<div id="xd1" style="position:absolute;white-space:nowrap;top:888.93px;font-size:15.5px;line-height:19px;color:#6C6E79;letter-spacing:-0.285px;left:747.90px;width:200px;text-align:center;text-indent:-0.285px;">Dec 11</div>
<div id="xd2" style="position:absolute;white-space:nowrap;top:888.93px;font-size:15.5px;line-height:19px;color:#6C6E79;letter-spacing:-0.285px;left:874.40px;width:200px;text-align:center;text-indent:-0.285px;">Dec 12</div>
<div id="xd3" style="position:absolute;white-space:nowrap;top:888.93px;font-size:15.5px;line-height:19px;color:#6C6E79;letter-spacing:-0.285px;left:1000.90px;width:200px;text-align:center;text-indent:-0.285px;">Dec 13</div>
<div id="xd4" style="position:absolute;white-space:nowrap;top:888.93px;font-size:15.5px;line-height:19px;color:#6C6E79;letter-spacing:-0.285px;left:1127.40px;width:200px;text-align:center;text-indent:-0.285px;">Dec 14</div>
<div id="xd5" style="position:absolute;white-space:nowrap;top:888.93px;font-size:15.5px;line-height:19px;color:#6C6E79;letter-spacing:-0.285px;left:1253.90px;width:200px;text-align:center;text-indent:-0.285px;">Dec 15</div>
<div id="xd6" style="position:absolute;white-space:nowrap;top:888.93px;font-size:15.5px;line-height:19px;color:#6C6E79;letter-spacing:-0.285px;left:1380.40px;width:200px;text-align:center;text-indent:-0.285px;">Dec 16</div>
<div id="lg0" style="position:absolute;white-space:nowrap;top:947.76px;font-size:18px;line-height:22px;color:#191B23;letter-spacing:0.260px;left:596.00px;"># 1-3</div>
<div id="lg1" style="position:absolute;white-space:nowrap;top:947.76px;font-size:18px;line-height:22px;color:#191B23;letter-spacing:0.610px;left:685.00px;"># 4-10</div>
<div id="lg2" style="position:absolute;white-space:nowrap;top:947.76px;font-size:18px;line-height:22px;color:#191B23;letter-spacing:0.194px;left:786.00px;"># 11-20</div>
<div id="lg3" style="position:absolute;white-space:nowrap;top:947.76px;font-size:18px;line-height:22px;color:#191B23;letter-spacing:0.339px;left:893.00px;"># 21-100</div>
<div id="lg4" style="position:absolute;white-space:nowrap;top:947.76px;font-size:18px;line-height:22px;color:#191B23;letter-spacing:0.473px;left:1012.00px;">Out of top 100</div>
<div id="tk0" style="position:absolute;white-space:nowrap;top:1030.07px;font-size:20px;line-height:25px;color:#191B23;letter-spacing:0.173px;font-weight:bold;left:43.00px;">Top Keywords</div>
<div id="pi0" style="position:absolute;white-space:nowrap;top:1030.07px;font-size:20px;line-height:25px;color:#191B23;letter-spacing:0.384px;font-weight:bold;left:570.00px;">Positive Impact</div>
<div id="pi1" style="position:absolute;white-space:nowrap;top:1030.07px;font-size:20px;line-height:25px;color:#247D5E;letter-spacing:0.060px;font-weight:bold;right:573.44px;text-align:right;">+0.15%</div>
<div id="ni0" style="position:absolute;white-space:nowrap;top:1030.07px;font-size:20px;line-height:25px;color:#191B23;letter-spacing:0.519px;font-weight:bold;left:1099.00px;">Negative Impact</div>
<div id="ni1" style="position:absolute;white-space:nowrap;top:1030.07px;font-size:20px;line-height:25px;color:#C9162B;letter-spacing:1.320px;font-weight:bold;right:43.18px;text-align:right;">-0.25%</div>
<div id="th1" style="position:absolute;white-space:nowrap;top:1105.10px;font-size:15px;line-height:19px;color:#191B23;letter-spacing:0.610px;left:42.00px;">Keyword</div>
<div id="th2" style="position:absolute;white-space:nowrap;top:1105.10px;font-size:15px;line-height:19px;color:#191B23;letter-spacing:0.540px;left:312.00px;">Pos.</div>
<div id="th3" style="position:absolute;white-space:nowrap;top:1105.10px;font-size:15px;line-height:19px;color:#191B23;letter-spacing:0.489px;right:1101.01px;text-align:right;">Visibility</div>
<div id="th4" style="position:absolute;white-space:nowrap;top:1105.10px;font-size:15px;line-height:19px;color:#191B23;letter-spacing:0.710px;left:570.00px;">Keyword</div>
<div id="th5" style="position:absolute;white-space:nowrap;top:1105.10px;font-size:15px;line-height:19px;color:#191B23;letter-spacing:0.476px;right:572.02px;text-align:right;">Visibility gain</div>
<div id="th6" style="position:absolute;white-space:nowrap;top:1105.10px;font-size:15px;line-height:19px;color:#191B23;letter-spacing:0.559px;left:1099.00px;">Keyword</div>
<div id="th7" style="position:absolute;white-space:nowrap;top:1105.10px;font-size:15px;line-height:19px;color:#191B23;letter-spacing:0.424px;right:44.08px;text-align:right;">Visibility loss</div>
<div id="tkk0" style="position:absolute;white-space:nowrap;top:1147.76px;font-size:18px;line-height:22px;color:#006DCA;letter-spacing:0.475px;left:42.00px;">super chewer dog toys</div>
<div id="tkp0" style="position:absolute;white-space:nowrap;top:1147.76px;font-size:18px;line-height:22px;color:#191B23;letter-spacing:0.810px;left:312.00px;">2</div>
<div id="tkc0" style="position:absolute;white-space:nowrap;top:1147.76px;font-size:18px;line-height:22px;color:#6C6E79;letter-spacing:0.810px;left:334.00px;">0</div>
<div id="tkv0" style="position:absolute;white-space:nowrap;top:1147.76px;font-size:18px;line-height:22px;color:#191B23;letter-spacing:-0.090px;right:1101.59px;text-align:right;">2.64%</div>
<div id="tkk1" style="position:absolute;white-space:nowrap;top:1194.76px;font-size:18px;line-height:22px;color:#006DCA;letter-spacing:0.475px;left:42.00px;">dog toys for chewers</div>
<div id="tkp1" style="position:absolute;white-space:nowrap;top:1194.76px;font-size:18px;line-height:22px;color:#191B23;letter-spacing:0.810px;left:312.00px;">10</div>
<div id="tkc1" style="position:absolute;white-space:nowrap;top:1194.76px;font-size:18px;line-height:22px;color:#247D5E;letter-spacing:0.810px;left:360.00px;">1</div>
<div id="tkv1" style="position:absolute;white-space:nowrap;top:1194.76px;font-size:18px;line-height:22px;color:#191B23;letter-spacing:-0.090px;right:1101.59px;text-align:right;">0.46%</div>
<div id="tkk2" style="position:absolute;white-space:nowrap;top:1241.76px;font-size:18px;line-height:22px;color:#006DCA;letter-spacing:0.475px;left:41.00px;">indestructible dog toys</div>
<div id="tkp2" style="position:absolute;white-space:nowrap;top:1241.76px;font-size:18px;line-height:22px;color:#191B23;letter-spacing:0.810px;left:312.00px;">15</div>
<div id="tkc2" style="position:absolute;white-space:nowrap;top:1241.76px;font-size:18px;line-height:22px;color:#C9162B;letter-spacing:0.810px;left:361.00px;">2</div>
<div id="tkv2" style="position:absolute;white-space:nowrap;top:1241.76px;font-size:18px;line-height:22px;color:#191B23;letter-spacing:-0.090px;right:1101.59px;text-align:right;">0.26%</div>
<div id="tkk3" style="position:absolute;white-space:nowrap;top:1288.56px;font-size:18px;line-height:22px;color:#006DCA;letter-spacing:0.475px;left:42.00px;">dog toy</div>
<div id="tkp3" style="position:absolute;white-space:nowrap;top:1288.56px;font-size:18px;line-height:22px;color:#191B23;letter-spacing:0.810px;left:312.00px;">19</div>
<div id="tkc3" style="position:absolute;white-space:nowrap;top:1288.56px;font-size:18px;line-height:22px;color:#C9162B;letter-spacing:0.810px;left:360.00px;">1</div>
<div id="tkv3" style="position:absolute;white-space:nowrap;top:1288.56px;font-size:18px;line-height:22px;color:#191B23;letter-spacing:-0.090px;right:1101.59px;text-align:right;">0.23%</div>
<div id="tkk4" style="position:absolute;white-space:nowrap;top:1335.56px;font-size:18px;line-height:22px;color:#006DCA;letter-spacing:0.475px;left:42.00px;">durable dog toys</div>
<div id="tkp4" style="position:absolute;white-space:nowrap;top:1335.56px;font-size:18px;line-height:22px;color:#191B23;letter-spacing:0.810px;left:312.00px;">21</div>
<div id="tkc4" style="position:absolute;white-space:nowrap;top:1335.56px;font-size:18px;line-height:22px;color:#C9162B;letter-spacing:0.810px;left:361.00px;">5</div>
<div id="tkv4" style="position:absolute;white-space:nowrap;top:1335.56px;font-size:18px;line-height:22px;color:#191B23;letter-spacing:-0.090px;right:1101.59px;text-align:right;">0.21%</div>
<div id="pk0" style="position:absolute;white-space:nowrap;top:1145.56px;font-size:18px;line-height:22px;color:#006DCA;letter-spacing:0.643px;left:570.00px;">best dog toys</div>
<div id="pv0" style="position:absolute;white-space:nowrap;top:1147.76px;font-size:18px;line-height:22px;color:#247D5E;letter-spacing:-0.010px;right:572.51px;text-align:right;">+0.08%</div>
<div id="pk1" style="position:absolute;white-space:nowrap;top:1192.56px;font-size:18px;line-height:22px;color:#006DCA;letter-spacing:0.643px;left:571.00px;">dog toys for chewers</div>
<div id="pv1" style="position:absolute;white-space:nowrap;top:1194.76px;font-size:18px;line-height:22px;color:#247D5E;letter-spacing:-0.010px;right:572.51px;text-align:right;">+0.04%</div>
<div id="pk2" style="position:absolute;white-space:nowrap;top:1239.56px;font-size:18px;line-height:22px;color:#006DCA;letter-spacing:0.643px;left:571.00px;">good toys for dogs</div>
<div id="pv2" style="position:absolute;white-space:nowrap;top:1241.76px;font-size:18px;line-height:22px;color:#247D5E;letter-spacing:-0.010px;right:572.51px;text-align:right;">+0.03%</div>
<div id="nk0" style="position:absolute;white-space:nowrap;top:1145.56px;font-size:18px;line-height:22px;color:#006DCA;letter-spacing:0.643px;left:1099.00px;">dog chew toys</div>
<div id="nv0" style="position:absolute;white-space:nowrap;top:1147.76px;font-size:18px;line-height:22px;color:#C9162B;letter-spacing:-0.910px;right:45.41px;text-align:right;">-0.11%</div>
<div id="nk1" style="position:absolute;white-space:nowrap;top:1192.56px;font-size:18px;line-height:22px;color:#006DCA;letter-spacing:0.643px;left:1099.00px;">dog toys</div>
<div id="nv1" style="position:absolute;white-space:nowrap;top:1194.76px;font-size:18px;line-height:22px;color:#C9162B;letter-spacing:0.330px;right:44.17px;text-align:right;">-0.05%</div>
<div id="nk2" style="position:absolute;white-space:nowrap;top:1239.56px;font-size:18px;line-height:22px;color:#006DCA;letter-spacing:0.643px;left:1099.00px;">durable dog toys</div>
<div id="nv2" style="position:absolute;white-space:nowrap;top:1241.76px;font-size:18px;line-height:22px;color:#C9162B;letter-spacing:0.330px;right:44.17px;text-align:right;">-0.04%</div>
<div id="nk3" style="position:absolute;white-space:nowrap;top:1286.36px;font-size:18px;line-height:22px;color:#006DCA;letter-spacing:0.643px;left:1099.00px;">indestructible dog toys</div>
<div id="nv3" style="position:absolute;white-space:nowrap;top:1288.56px;font-size:18px;line-height:22px;color:#C9162B;letter-spacing:0.330px;right:44.17px;text-align:right;">-0.03%</div>
<div id="nk4" style="position:absolute;white-space:nowrap;top:1333.36px;font-size:18px;line-height:22px;color:#006DCA;letter-spacing:0.643px;left:1099.00px;">dog treats</div>
<div id="nv4" style="position:absolute;white-space:nowrap;top:1335.56px;font-size:18px;line-height:22px;color:#C9162B;letter-spacing:-0.350px;right:44.85px;text-align:right;">-0.01%</div>
<div id="btn1" style="position:absolute;white-space:nowrap;top:1403.26px;font-size:18px;line-height:22px;color:#fff;letter-spacing:0.396px;left:54.00px;">View all 13 keywords</div>
<div id="btn2" style="position:absolute;white-space:nowrap;top:1403.26px;font-size:18px;line-height:22px;color:#fff;letter-spacing:0.514px;left:582.00px;">View all 3 improved keywords</div>
<div id="btn3" style="position:absolute;white-space:nowrap;top:1403.26px;font-size:18px;line-height:22px;color:#fff;letter-spacing:0.551px;left:1110.00px;">View all 6 declined keywords</div>
</body></html>
